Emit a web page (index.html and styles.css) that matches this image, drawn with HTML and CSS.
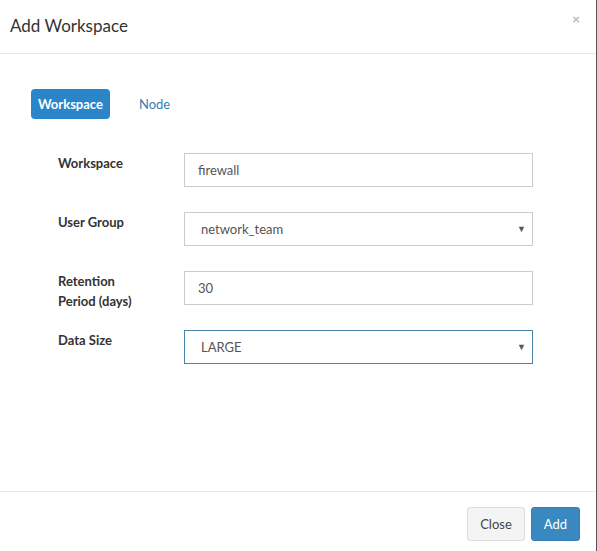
FILE: index.html
```html
<!DOCTYPE html>
<html>
<head>
<meta charset="utf-8">
<link rel="stylesheet" href="styles.css">
</head>
<body>
<div class="modal">
  <div class="modal-header">
    <h4 class="modal-title">Add Workspace</h4>
    <span class="close">×</span>
  </div>
  <div class="modal-body">
    <ul class="pills">
      <li class="pill active">Workspace</li>
      <li class="pill">Node</li>
    </ul>
    <form class="form">
      <div class="row">
        <label class="label">Workspace</label>
        <div class="control">firewall</div>
      </div>
      <div class="row">
        <label class="label">User Group</label>
        <div class="control select">network_team<span class="caret">▼</span></div>
      </div>
      <div class="row">
        <label class="label">Retention<br>Period (days)</label>
        <div class="control">30</div>
      </div>
      <div class="row">
        <label class="label">Data Size</label>
        <div class="control select focus">LARGE<span class="caret">▼</span></div>
      </div>
    </form>
  </div>
  <div class="modal-footer">
    <button class="btn btn-default">Close</button>
    <button class="btn btn-primary">Add</button>
  </div>
</div>
</body>
</html>
```

FILE: styles.css
```css
* { box-sizing: border-box; }
html, body { margin: 0; padding: 0; background: #fff; }
body {
  font-family: Lato, "Open Sans", sans-serif;
  font-size: 13px;
  color: #333;
  width: 597px;
  height: 551px;
  overflow: hidden;
}
.modal {
  width: 597px;
  height: 551px;
  border-right: 1px solid #555;
  display: flex;
  flex-direction: column;
}
.modal-header {
  height: 54px;
  border-bottom: 1px solid #e9e9e9;
  display: flex;
  justify-content: space-between;
  align-items: flex-start;
  padding: 0 16px 0 10px;
}
.modal-title {
  margin: 14px 0 0;
  font-size: 17px;
  font-weight: 400;
  color: #333;
  line-height: 24px;
}
.close {
  margin-top: 10px;
  font-size: 14px;
  color: #bbb;
  font-weight: 700;
}
.modal-body {
  flex: 1;
  padding: 35px 0 0 31px;
}
.pills {
  list-style: none;
  margin: 0;
  padding: 0;
  display: flex;
  gap: 4px;
  height: 30px;
}
.pill {
  padding: 0 11px;
  height: 30px;
  line-height: 30px;
  border-radius: 4px;
  color: #3c7bb0;
  font-size: 13px;
  margin-right: 14px;
}
.pill.active {
  background: #2a86c8;
  color: #fff;
  font-weight: 700;
  padding: 0 7px;
}
.form {
  margin-top: 34px;
  padding-left: 27px;
  display: flex;
  flex-direction: column;
  gap: 25px;
}
.row {
  display: flex;
  align-items: flex-start;
  height: 34px;
}
.label {
  width: 126px;
  font-weight: 700;
  font-size: 13px;
  line-height: 20px;
  color: #333;
}
.control {
  width: 349px;
  height: 34px;
  border: 1px solid #ccc;
  padding: 0 13px;
  line-height: 32px;
  font-size: 13px;
  color: #555;
  position: relative;
}
.select { padding-left: 16px; }
.focus { border-color: #4a85a8; }
.caret {
  position: absolute;
  right: 6px;
  top: 0;
  font-size: 9px;
  color: #555;
}
.modal-footer {
  height: 60px;
  border-top: 1px solid #e9e9e9;
  display: flex;
  justify-content: flex-end;
  align-items: flex-start;
  padding: 15px 16px 0 0;
  gap: 6px;
}
.btn {
  font-family: inherit;
  font-size: 13px;
  height: 34px;
  padding: 0 12px;
  border-radius: 3px;
  border: 1px solid #ddd;
}
.btn-default { background: #f4f4f4; color: #444; }
.btn-primary { background: #3a88c0; border-color: #367fb3; color: #fff; }
```
